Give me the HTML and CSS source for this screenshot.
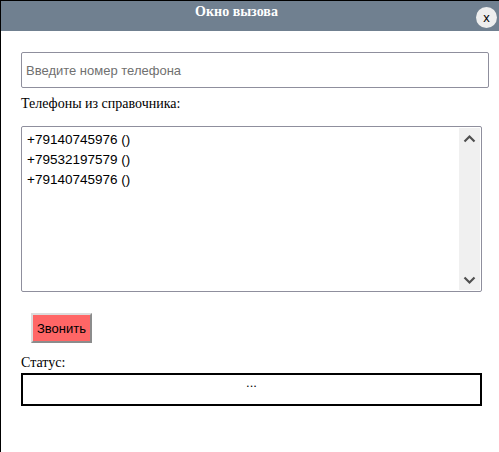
FILE: index.html
```html
<!DOCTYPE html>
<html lang="ru">
<head>
<meta charset="utf-8">
<title>Окно вызова</title>
<link rel="stylesheet" href="styles.css">
</head>
<body>
<div class="dialog">
  <div class="header">
    <div class="title">Окно вызова</div>
    <div class="close">x</div>
  </div>
  <div class="content">
    <input class="phone" type="text" placeholder="Введите номер телефона">
    <div class="label">Телефоны из справочника:</div>
    <div class="list">
      <div class="items">
        <div class="item">+79140745976 ()</div>
        <div class="item">+79532197579 ()</div>
        <div class="item">+79140745976 ()</div>
      </div>
      <div class="scrollbar">
        <svg class="arrow" width="21" height="14" viewBox="0 0 21 14"><path d="M5.5 9.5 L10.5 4.5 L15.5 9.5" fill="none" stroke="#505050" stroke-width="2.2"/></svg>
        <svg class="arrow" width="21" height="14" viewBox="0 0 21 14"><path d="M5.5 4.5 L10.5 9.5 L15.5 4.5" fill="none" stroke="#505050" stroke-width="2.2"/></svg>
      </div>
    </div>
    <div class="actions">
      <button class="call">Звонить</button>
    </div>
    <div class="status-label">Статус:</div>
    <div class="status">...</div>
  </div>
</div>
</body>
</html>
```

FILE: styles.css
```css
html, body {
  margin: 0;
  padding: 0;
  background: #fff;
}
body {
  font-family: "Liberation Serif", "Times New Roman", serif;
  width: 499px;
  height: 452px;
  overflow: hidden;
}
.dialog {
  box-sizing: border-box;
  height: 452px;
  border-top: 1px solid #000;
  border-left: 1px solid #000;
  background: #fff;
}
.header {
  position: relative;
  height: 30px;
  background: #708090;
}
.title {
  padding: 2px 27px 0 0;
  text-align: center;
  color: #fff;
  font-weight: bold;
  font-size: 14px;
  line-height: 17px;
}
.close {
  position: absolute;
  left: 475px;
  top: 6px;
  width: 21px;
  height: 21px;
  border-radius: 50%;
  background: #eeeeee;
  color: #000;
  font-family: "Liberation Sans", Arial, sans-serif;
  font-size: 13px;
  line-height: 21px;
  text-align: center;
}
.content {
  padding: 21px 10px 0 20px;
}
.phone {
  display: block;
  box-sizing: border-box;
  width: 468px;
  height: 36px;
  margin: 0;
  padding: 0 4px;
  border: 1px solid #8f8f9d;
  border-radius: 2px;
  font-family: "Liberation Sans", Arial, sans-serif;
  font-size: 13px;
  color: #000;
  outline: none;
}
.phone::placeholder {
  color: #707070;
  opacity: 1;
}
.label {
  margin-top: 8px;
  font-size: 14px;
  line-height: 16px;
  color: #000;
}
.list {
  box-sizing: border-box;
  display: flex;
  width: 461px;
  height: 166px;
  margin-top: 14px;
  border: 1px solid #8f8f9d;
  border-radius: 2px;
  font-family: "Liberation Sans", Arial, sans-serif;
  font-size: 13.5px;
  color: #000;
}
.items {
  flex: 1;
  padding: 3px 0 0 5px;
}
.item {
  height: 20px;
  line-height: 20px;
}
.scrollbar {
  width: 21px;
  margin: 1px 1px 1px 0;
  background: #f0f0f0;
  display: flex;
  flex-direction: column;
  justify-content: space-between;
  padding: 4px 0 3px;
}
.arrow {
  display: block;
}
.actions {
  padding: 21px 0 0 10px;
}
.call {
  box-sizing: border-box;
  width: 61px;
  height: 30px;
  margin: 0;
  padding: 0;
  background: #ff6666;
  border: 2px solid;
  border-color: #dcdcdc #8c8c8c #8c8c8c #dcdcdc;
  font-family: "Liberation Sans", Arial, sans-serif;
  font-size: 13px;
  color: #000;
}
.status-label {
  margin-top: 12px;
  font-size: 14px;
  line-height: 16px;
  color: #000;
}
.status {
  box-sizing: border-box;
  width: 461px;
  height: 33px;
  margin-top: 2px;
  border: 2px solid #000;
  text-align: center;
  font-family: "Liberation Sans", Arial, sans-serif;
  font-size: 13px;
  line-height: 16px;
  color: #000;
}
```
